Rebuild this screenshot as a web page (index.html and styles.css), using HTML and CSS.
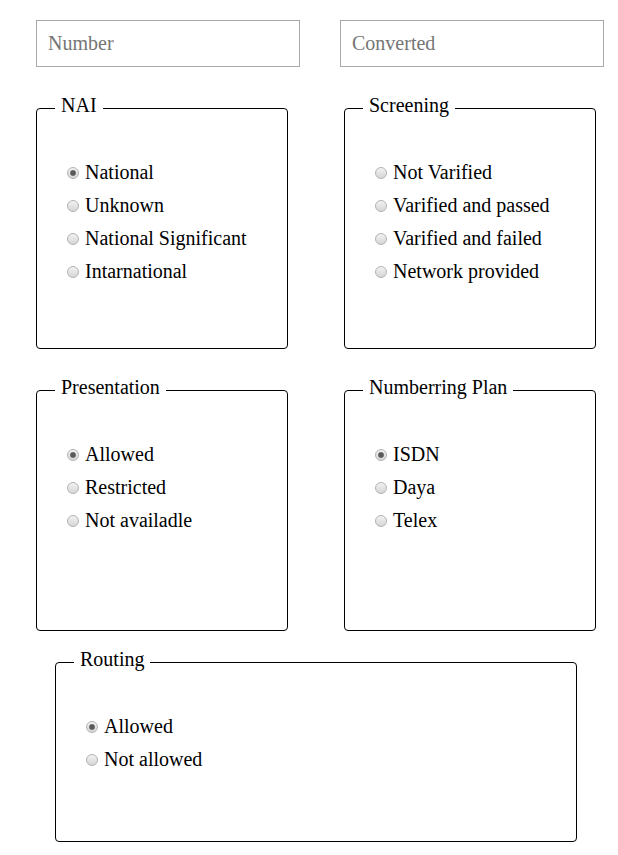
FILE: index.html
```html
<!DOCTYPE html>
<html>
<head>
<meta charset="utf-8">
<link rel="stylesheet" href="styles.css">
</head>
<body>
<div class="page">
  <div class="inputs">
    <input class="field" type="text" placeholder="Number">
    <input class="field" type="text" placeholder="Converted">
  </div>
  <div class="row">
    <fieldset class="group">
      <legend>NAI</legend>
      <div class="options">
        <label class="opt"><input type="radio" name="nai" checked>National</label>
        <label class="opt"><input type="radio" name="nai">Unknown</label>
        <label class="opt"><input type="radio" name="nai">National Significant</label>
        <label class="opt"><input type="radio" name="nai">Intarnational</label>
      </div>
    </fieldset>
    <fieldset class="group">
      <legend>Screening</legend>
      <div class="options">
        <label class="opt"><input type="radio" name="scr">Not Varified</label>
        <label class="opt"><input type="radio" name="scr">Varified and passed</label>
        <label class="opt"><input type="radio" name="scr">Varified and failed</label>
        <label class="opt"><input type="radio" name="scr">Network provided</label>
      </div>
    </fieldset>
  </div>
  <div class="row">
    <fieldset class="group">
      <legend>Presentation</legend>
      <div class="options">
        <label class="opt"><input type="radio" name="pres" checked>Allowed</label>
        <label class="opt"><input type="radio" name="pres">Restricted</label>
        <label class="opt"><input type="radio" name="pres">Not availadle</label>
      </div>
    </fieldset>
    <fieldset class="group">
      <legend>Numberring Plan</legend>
      <div class="options">
        <label class="opt"><input type="radio" name="plan" checked>ISDN</label>
        <label class="opt"><input type="radio" name="plan">Daya</label>
        <label class="opt"><input type="radio" name="plan">Telex</label>
      </div>
    </fieldset>
  </div>
  <fieldset class="group wide">
    <legend>Routing</legend>
    <div class="options">
      <label class="opt"><input type="radio" name="route" checked>Allowed</label>
      <label class="opt"><input type="radio" name="route">Not allowed</label>
    </div>
  </fieldset>
</div>
</body>
</html>
```
FILE: styles.css
```css
html, body {
  margin: 0;
  padding: 0;
  background: #fff;
}
body {
  font-family: "Liberation Serif", "Times New Roman", serif;
  font-size: 20px;
  color: #000;
}
.page {
  padding: 20px 0 0 36px;
}
.inputs {
  display: flex;
  gap: 40px;
}
.field {
  box-sizing: border-box;
  width: 264px;
  height: 47px;
  border: 1px solid #a9a9a9;
  padding: 0 11px;
  margin: 0;
  font-family: "Liberation Serif", "Times New Roman", serif;
  font-size: 20px;
  color: #000;
  outline: none;
}
.field::placeholder {
  color: #757575;
}
.row {
  display: flex;
  gap: 56px;
  margin-top: 27px;
}
.group {
  box-sizing: border-box;
  width: 252px;
  height: 255px;
  margin: 0;
  padding: 0 18px;
  border: 1px solid #000;
  border-radius: 4px;
  min-width: 0;
}
.group legend {
  padding: 0 6px 5px;
  font-size: 20px;
  line-height: 23px;
}
.wide {
  width: 522px;
  height: 194px;
  margin: 17px 0 0 19px;
}
.options {
  display: flex;
  flex-direction: column;
  margin-top: 34px;
  padding-left: 12px;
}
.opt {
  display: flex;
  align-items: center;
  height: 33px;
  line-height: 33px;
  white-space: nowrap;
}
.opt input {
  appearance: none;
  -webkit-appearance: none;
  box-sizing: border-box;
  width: 12px;
  height: 12px;
  margin: 0 6px 0 0;
  border: 1px solid #b3b3b3;
  border-radius: 50%;
  background: linear-gradient(#f2f2f2, #d6d6d6);
  flex: none;
}
.opt input:checked {
  background: radial-gradient(circle, #5a5a5a 0 2.2px, #8a8a8a 2.8px, transparent 3.4px), linear-gradient(#f2f2f2, #d6d6d6);
}
```
